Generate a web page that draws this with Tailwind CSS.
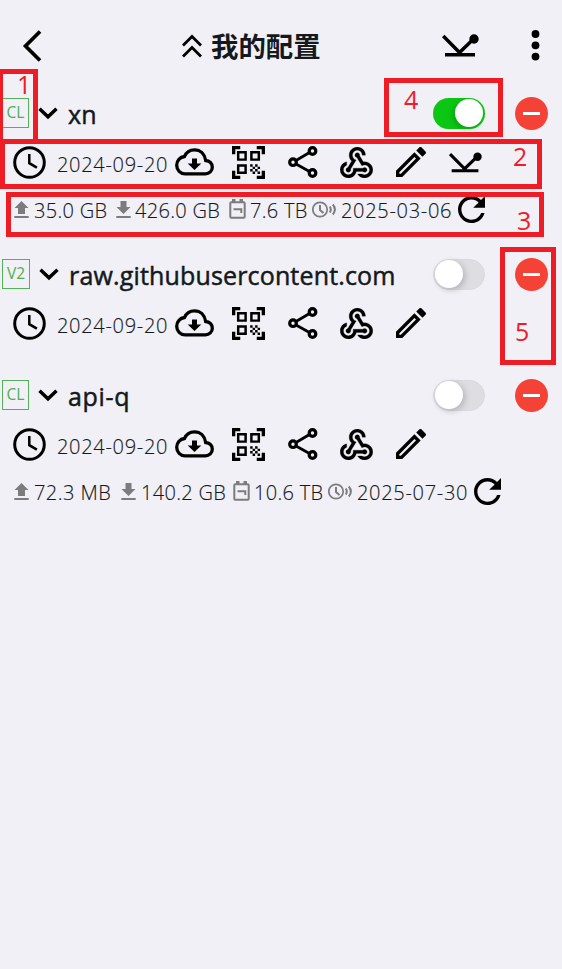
<!DOCTYPE html>
<html lang="zh"><head><meta charset="utf-8"><title>我的配置</title>
<script src="https://cdn.jsdelivr.net/npm/@tailwindcss/browser@4"></script></head>
<body class="bg-[#f1f0f6] text-[#14191c] font-['Open_Sans','Noto_Sans_CJK_SC',sans-serif]">
<svg class="hidden">
<symbol id="clock" viewBox="0 0 33 33"><g fill="none" stroke="#000" stroke-width="3"><circle cx="16.500" cy="16.500" r="14.800"/><path d="M16.300 8v9.200l7.600 4.400" stroke-width="2.500"/></g></symbol>
<symbol id="cloud" viewBox="0 0 39 28"><path d="M10 25.800h20.500c3.800 0 6.800-2.900 6.800-6.600 0-3.800-2.800-6.500-6.600-6.700C29.700 6 25.400 1.800 19.500 1.800c-4.500 0-8.300 2.500-10 6.700C5 9 1.700 12.700 1.700 17.200c0 4.800 3.700 8.600 8.300 8.600z" fill="none" stroke="#000" stroke-width="3.300"/><path d="M17 10.500h5v5h4.300l-6.800 6.500-6.800-6.500H17z"/></symbol>
<symbol id="qr" viewBox="2 2 20 20"><path d="M9.500 6.500v3h-3v-3h3M11 5H5v6h6V5zm-1.500 9.500v3h-3v-3h3M11 13H5v6h6v-6zm6.500-6.500v3h-3v-3h3M19 5h-6v6h6V5zm-6 8h1.500v1.500H13V13zm1.500 1.500H16V16h-1.500v-1.500zM16 13h1.500v1.500H16V13zm-3 3h1.500v1.500H13V16zm1.500 1.500H16V19h-1.500v-1.500zM16 16h1.500v1.500H16V16zm1.500-1.500H19V16h-1.500v-1.500zm0 3H19V19h-1.500v-1.500zM22 7h-2V4h-3V2h5v5zm0 15v-5h-2v3h-3v2h5zM2 22h5v-2H4v-3H2v5zM2 2v5h2V4h3V2H2z"/></symbol>
<symbol id="share" viewBox="0 0 30 32"><g fill="none" stroke="#000"><path d="M8 14.500L21.500 6.500M8 18l13.500 7.500" stroke-width="2.800"/><g stroke-width="3.200"><circle cx="5" cy="16.200" r="3.300"/><circle cx="24.500" cy="5" r="3.300"/><circle cx="24.500" cy="27" r="3.300"/></g></g></symbol>
<symbol id="hook" viewBox="2 2 20 19"><path d="M10 15h5.880c.27-.31.67-.5 1.120-.5.83 0 1.500.67 1.500 1.500s-.67 1.500-1.500 1.500c-.44 0-.84-.19-1.120-.5H11.900c-.46 2.280-2.480 4-4.900 4-2.760 0-5-2.240-5-5 0-2.420 1.720-4.440 4-4.900v2.070c-1.160.41-2 1.530-2 2.830 0 1.650 1.350 3 3 3s3-1.350 3-3v-1zm2.500-11c1.650 0 3 1.350 3 3h2c0-2.760-2.240-5-5-5s-5 2.240-5 5c0 1.430.6 2.710 1.550 3.620l-2.350 3.900c-.68.14-1.200.75-1.200 1.480 0 .83.67 1.500 1.500 1.500s1.500-.67 1.500-1.500c0-.16-.02-.31-.07-.45l3.380-5.630C10.490 9.610 9.500 8.420 9.500 7c0-1.650 1.350-3 3-3zm4.500 9c-.64 0-1.230.2-1.720.54l-3.050-5.070C11.530 8.350 11 7.740 11 7c0-.83.67-1.500 1.500-1.500S14 6.170 14 7c0 .15-.02.29-.06.43l2.190 3.650c.28-.05.57-.08.87-.08 2.760 0 5 2.240 5 5s-2.240 5-5 5c-1.850 0-3.470-1.010-4.330-2.500h2.670c.48.32 1.050.5 1.660.5 1.650 0 3-1.350 3-3s-1.350-3-3-3z" stroke="#000" stroke-width=".15"/></symbol>
<symbol id="pen" viewBox="3 3 18 18"><path d="M14.060 9l.94.940L5.920 19H5v-.920L14.060 9M17.660 3c-.25 0-.51.1-.7.290l-1.830 1.830 3.750 3.750 1.830-1.830c.39-.39.39-1.040 0-1.410l-2.340-2.340C18.170 3.090 17.920 3 17.660 3M14.060 6.190L3 17.250V21h3.750L17.810 9.940 14.060 6.190z"/></symbol>
<symbol id="bounce" viewBox="0 0 37 23"><path d="M1.200 2L17.500 18.500 32 4.500M3 20.800h30" fill="none" stroke="#000" stroke-width="3.500"/><circle cx="32" cy="5" r="4.700"/></symbol>
<symbol id="chev" viewBox="0 0 20 13"><path d="M1.500 1.700L10 9.800l8.500-8.100" fill="none" stroke="#000" stroke-width="3.400"/></symbol>
<symbol id="up" viewBox="0 0 15 17"><path d="M7.500 0l7 7H11v6H4V7H.5zM.3 15h14.400v2H.3z" fill="#7c7c7e"/></symbol>
<symbol id="down" viewBox="0 0 15 17"><path d="M4.500 0h6v6h4l-7 7-7-7h4zM.3 15h14.400v2H.3z" fill="#7c7c7e"/></symbol>
<symbol id="bat" viewBox="0 0 17 20"><rect x="1.300" y="3.300" width="14.400" height="15.400" rx="1" fill="none" stroke="#7c7c7e" stroke-width="2"/><path d="M3 0h3.500v3H3zM10.500 0H14v3h-3.500z" fill="#7c7c7e"/><path d="M4.500 10.300h7.800v3.800" fill="none" stroke="#7c7c7e" stroke-width="2"/></symbol>
<symbol id="exp" viewBox="0 0 24 17"><g fill="none" stroke="#7c7c7e"><circle cx="8" cy="8.500" r="7.200" stroke-width="1.700"/><path d="M8 4v5l3.500 3" stroke-width="2"/><path d="M17.800 5.500c1.300 2 1.300 4 0 6M20.800 3.500c2.500 3 2.500 7 0 10" stroke-width="2"/></g></symbol>
<symbol id="ref" viewBox="4 4 16 16"><path d="M17.650 6.350C16.200 4.900 14.210 4 12 4c-4.420 0-7.990 3.580-7.990 8s3.570 8 7.990 8c3.730 0 6.840-2.550 7.730-6h-2.080c-.82 2.330-3.040 4-5.650 4-3.310 0-6-2.690-6-6s2.690-6 6-6c1.660 0 3.140.69 4.220 1.780L13 11h7V4l-2.350 2.350z"/></symbol>
</svg>
<div class="relative w-[562px] h-[969px] overflow-hidden">
<header class="flex h-[91px] items-center pl-[22px]">
<svg class="w-5 h-8" viewBox="0 0 20 32"><path d="M18 1.500L3.500 16 18 30.500" fill="none" stroke="#000" stroke-width="3.700"/></svg>
<svg class="ml-[140px] w-5 h-6" viewBox="0 0 20 24"><path d="M1 11.500L10 2.500l9 9M1 22.500l9-9 9 9" fill="none" stroke="#000" stroke-width="2.800"/></svg>
<h1 class="ml-[9px] w-[110px] whitespace-nowrap text-[27.400px] leading-9 font-bold pt-[3px]">我的配置</h1>
<svg class="ml-[121px] w-[37px] h-[23px]"><use href="#bounce"/></svg>
<svg class="ml-[52px] w-[9px] h-[31px]" viewBox="0 0 9 31"><circle cx="4.500" cy="4" r="3.900"/><circle cx="4.500" cy="15.300" r="3.900"/><circle cx="4.500" cy="26.600" r="3.900"/></svg>
</header>
<main>
<section class="h-[161px]">
<div class="flex h-[45px] items-center pl-[2px]">
<span class="mb-[2px] flex h-[30px] w-[27px] items-center justify-center border-[1.500px] border-[#53b257] text-[15.500px] text-[#4caf50]">CL</span>
<svg class="ml-[9px] w-5 h-[13px]"><use href="#chev"/></svg>
<h2 class="ml-[10px] w-[365px] whitespace-nowrap text-[25px] font-medium tracking-[0.160px] [-webkit-text-stroke:0.500px] pt-[3px]">xn</h2>
<span class="mb-px flex h-[31px] w-[52px] items-center justify-end rounded-full bg-[#0bc713] p-[2px]"><i class="size-7 rounded-full bg-white shadow-[-2px_2px_6px_#0003]"></i></span>
<span class="ml-[30px] flex size-[33px] items-center justify-center rounded-full bg-[#f44336]"><i class="h-[3px] w-[17px] bg-white"></i></span>
</div>
<div class="flex h-[54px] items-center pl-[13px] pb-[2px]">
<svg class="w-[33px] h-[33px]"><use href="#clock"/></svg>
<span class="ml-[11px] w-[118px] whitespace-nowrap text-[20px] font-light tracking-[0.700px] [-webkit-text-stroke:0.150px] pt-[5px]">2024-09-20</span>
<svg class="w-[39px] h-[28px]"><use href="#cloud"/></svg>
<svg class="ml-[18px] w-[33px] h-[33px]"><use href="#qr"/></svg>
<svg class="ml-[23px] w-[30px] h-[32px]"><use href="#share"/></svg>
<svg class="ml-[22px] w-[33px] h-[31px]"><use href="#hook"/></svg>
<svg class="ml-[23px] w-[30px] h-[30px]"><use href="#pen"/></svg>
<svg class="ml-[23px] w-[33px] h-[21px]"><use href="#bounce"/></svg>
</div>
<div class="flex h-[38px] items-center pl-[14px] text-[20px] font-light whitespace-nowrap [-webkit-text-stroke:0.150px]">
<svg class="w-[15px] h-[17px]"><use href="#up"/></svg>
<span class="ml-[5px] w-[82px] tracking-[0.300px] pt-[3px]">35.0 GB</span>
<svg class="w-[15px] h-[17px]"><use href="#down"/></svg>
<span class="ml-[4px] w-[94px] tracking-[0.300px] pt-[3px]">426.0 GB</span>
<svg class="w-[17px] h-[20px]"><use href="#bat"/></svg>
<span class="ml-[4px] w-[62px] tracking-[0.300px] pt-[3px]">7.6 TB</span>
<svg class="w-[24px] h-[17px]"><use href="#exp"/></svg>
<span class="ml-[5px] w-[117px] tracking-[0.700px] pt-[3px]">2025-03-06</span>
<svg class="w-[27px] h-[27px]"><use href="#ref"/></svg>
</div>
</section>
<section class="h-[121px]">
<div class="flex h-[45px] items-center pl-[2px]">
<span class="mb-[2px] flex h-[30px] w-[28px] items-center justify-center border-[1.500px] border-[#53b257] text-[15.500px] text-[#4caf50]">V2</span>
<svg class="ml-[9px] w-5 h-[13px]"><use href="#chev"/></svg>
<h2 class="ml-[10px] w-[364px] whitespace-nowrap text-[25px] font-medium tracking-[0.160px] [-webkit-text-stroke:0.500px] pt-[3px]">raw.githubusercontent.com</h2>
<span class="mb-px flex h-[31px] w-[52px] items-center rounded-full border border-[#d9d9de] bg-[#dedde2] p-px"><i class="size-7 rounded-full bg-white shadow-[2px_2px_6px_#0003]"></i></span>
<span class="ml-[30px] flex size-[33px] items-center justify-center rounded-full bg-[#f44336]"><i class="h-[3px] w-[17px] bg-white"></i></span>
</div>
<div class="flex h-[54px] items-center pl-[13px] pb-[2px]">
<svg class="w-[33px] h-[33px]"><use href="#clock"/></svg>
<span class="ml-[11px] w-[118px] whitespace-nowrap text-[20px] font-light tracking-[0.700px] [-webkit-text-stroke:0.150px] pt-[5px]">2024-09-20</span>
<svg class="w-[39px] h-[28px]"><use href="#cloud"/></svg>
<svg class="ml-[18px] w-[33px] h-[33px]"><use href="#qr"/></svg>
<svg class="ml-[23px] w-[30px] h-[32px]"><use href="#share"/></svg>
<svg class="ml-[22px] w-[33px] h-[31px]"><use href="#hook"/></svg>
<svg class="ml-[23px] w-[30px] h-[30px]"><use href="#pen"/></svg>
</div>
</section>
<section>
<div class="flex h-[45px] items-center pl-[2px]">
<span class="mb-[2px] flex h-[30px] w-[27px] items-center justify-center border-[1.500px] border-[#53b257] text-[15.500px] text-[#4caf50]">CL</span>
<svg class="ml-[9px] w-5 h-[13px]"><use href="#chev"/></svg>
<h2 class="ml-[10px] w-[365px] whitespace-nowrap text-[25px] font-medium tracking-[0.700px] [-webkit-text-stroke:0.500px] pt-[3px]">api-q</h2>
<span class="mb-px flex h-[31px] w-[52px] items-center rounded-full border border-[#d9d9de] bg-[#dedde2] p-px"><i class="size-7 rounded-full bg-white shadow-[2px_2px_6px_#0003]"></i></span>
<span class="ml-[30px] flex size-[33px] items-center justify-center rounded-full bg-[#f44336]"><i class="h-[3px] w-[17px] bg-white"></i></span>
</div>
<div class="flex h-[54px] items-center pl-[13px] pb-[2px]">
<svg class="w-[33px] h-[33px]"><use href="#clock"/></svg>
<span class="ml-[11px] w-[118px] whitespace-nowrap text-[20px] font-light tracking-[0.700px] [-webkit-text-stroke:0.150px] pt-[5px]">2024-09-20</span>
<svg class="w-[39px] h-[28px]"><use href="#cloud"/></svg>
<svg class="ml-[18px] w-[33px] h-[33px]"><use href="#qr"/></svg>
<svg class="ml-[23px] w-[30px] h-[32px]"><use href="#share"/></svg>
<svg class="ml-[22px] w-[33px] h-[31px]"><use href="#hook"/></svg>
<svg class="ml-[23px] w-[30px] h-[30px]"><use href="#pen"/></svg>
</div>
<div class="flex h-[38px] items-center pl-[14px] text-[20px] font-light whitespace-nowrap [-webkit-text-stroke:0.150px]">
<svg class="w-[15px] h-[17px]"><use href="#up"/></svg>
<span class="ml-[5px] w-[87px] tracking-[0.450px] pt-[3px]">72.3 MB</span>
<svg class="w-[15px] h-[17px]"><use href="#down"/></svg>
<span class="ml-[5px] w-[92px] tracking-[0.300px] pt-[3px]">140.2 GB</span>
<svg class="w-[17px] h-[20px]"><use href="#bat"/></svg>
<span class="ml-[4px] w-[74px] tracking-[0.300px] pt-[3px]">10.6 TB</span>
<svg class="w-[24px] h-[17px]"><use href="#exp"/></svg>
<span class="ml-[5px] w-[117px] tracking-[0.700px] pt-[3px]">2025-07-30</span>
<svg class="w-[27px] h-[27px]"><use href="#ref"/></svg>
</div>
</section>
</main>
<!-- numbered callouts -->
<div class="pointer-events-none text-[25px] leading-none text-[#ee1c25]">
<div class="absolute left-[-2px] top-[69px] h-[75px] w-[40px] border-[5px] border-[#ee1c25]"></div>
<div class="absolute left-0 top-[139px] h-[50px] w-[542px] border-[5px] border-[#ee1c25]"></div>
<div class="absolute left-[6px] top-[192px] h-[45px] w-[538px] border-[5px] border-[#ee1c25]"></div>
<div class="absolute left-[384px] top-[78px] h-[59px] w-[119px] border-[5px] border-[#ee1c25]"></div>
<div class="absolute left-[500px] top-[247px] h-[118px] w-[56px] border-[5px] border-[#ee1c25]"></div>
<span class="absolute left-[17px] top-[72px]">1</span>
<span class="absolute left-[513px] top-[144px]">2</span>
<span class="absolute left-[517px] top-[208px]">3</span>
<span class="absolute left-[404px] top-[87px]">4</span>
<span class="absolute left-[515px] top-[319px]">5</span>
</div>
</div>
</body></html>
